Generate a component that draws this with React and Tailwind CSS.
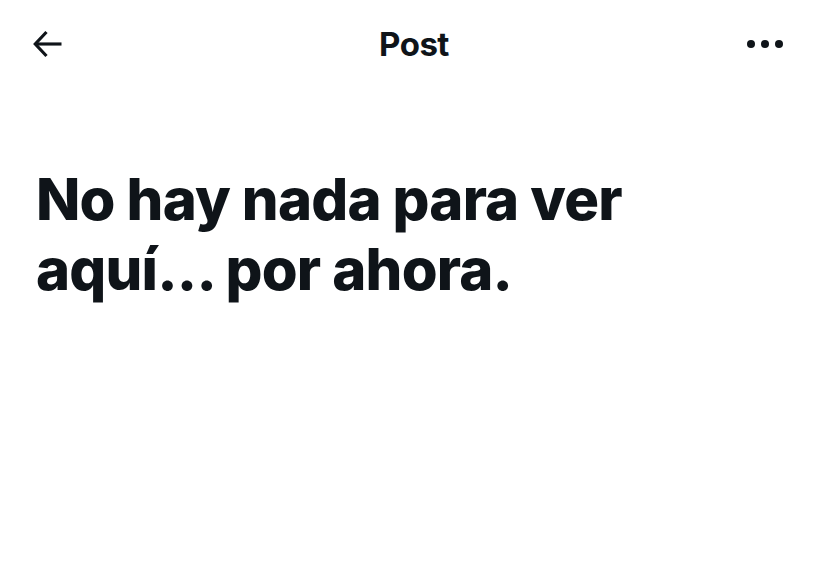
export default function App() {
  return (
    <div className="w-[828px] h-[577px] bg-white text-[#0f1419] overflow-hidden" style={{ fontFamily: "Inter, 'Noto Sans', sans-serif" }}>
      <header className="h-[88px] grid grid-cols-[1fr_auto_1fr] items-center pl-[30px] pr-[44px]">
        <button className="w-[36px] h-[36px] flex items-center justify-center justify-self-start">
          <svg width="36" height="36" viewBox="0 0 24 24" fill="none" stroke="currentColor" strokeWidth="2.1" strokeLinecap="butt">
            <path d="M21 12H3.5" />
            <path d="M11 4L3.5 12 11 20" strokeLinejoin="miter" />
          </svg>
        </button>
        <h1 className="text-[33px] font-bold tracking-[-0.5px] leading-none ml-[14px]">Post</h1>
        <button className="w-[38px] h-[36px] flex items-center justify-center justify-self-end">
          <svg width="38" height="10" viewBox="0 0 38 10" fill="currentColor">
            <circle cx="5" cy="5" r="4" />
            <circle cx="19" cy="5" r="4" />
            <circle cx="33" cy="5" r="4" />
          </svg>
        </button>
      </header>
      <main className="px-[36px] pt-[76px]">
        <h2 className="text-[58px] font-extrabold leading-[70px] tracking-[-0.8px] w-[640px]">
          No hay nada para ver aquí... por ahora.
        </h2>
      </main>
    </div>
  );
}
